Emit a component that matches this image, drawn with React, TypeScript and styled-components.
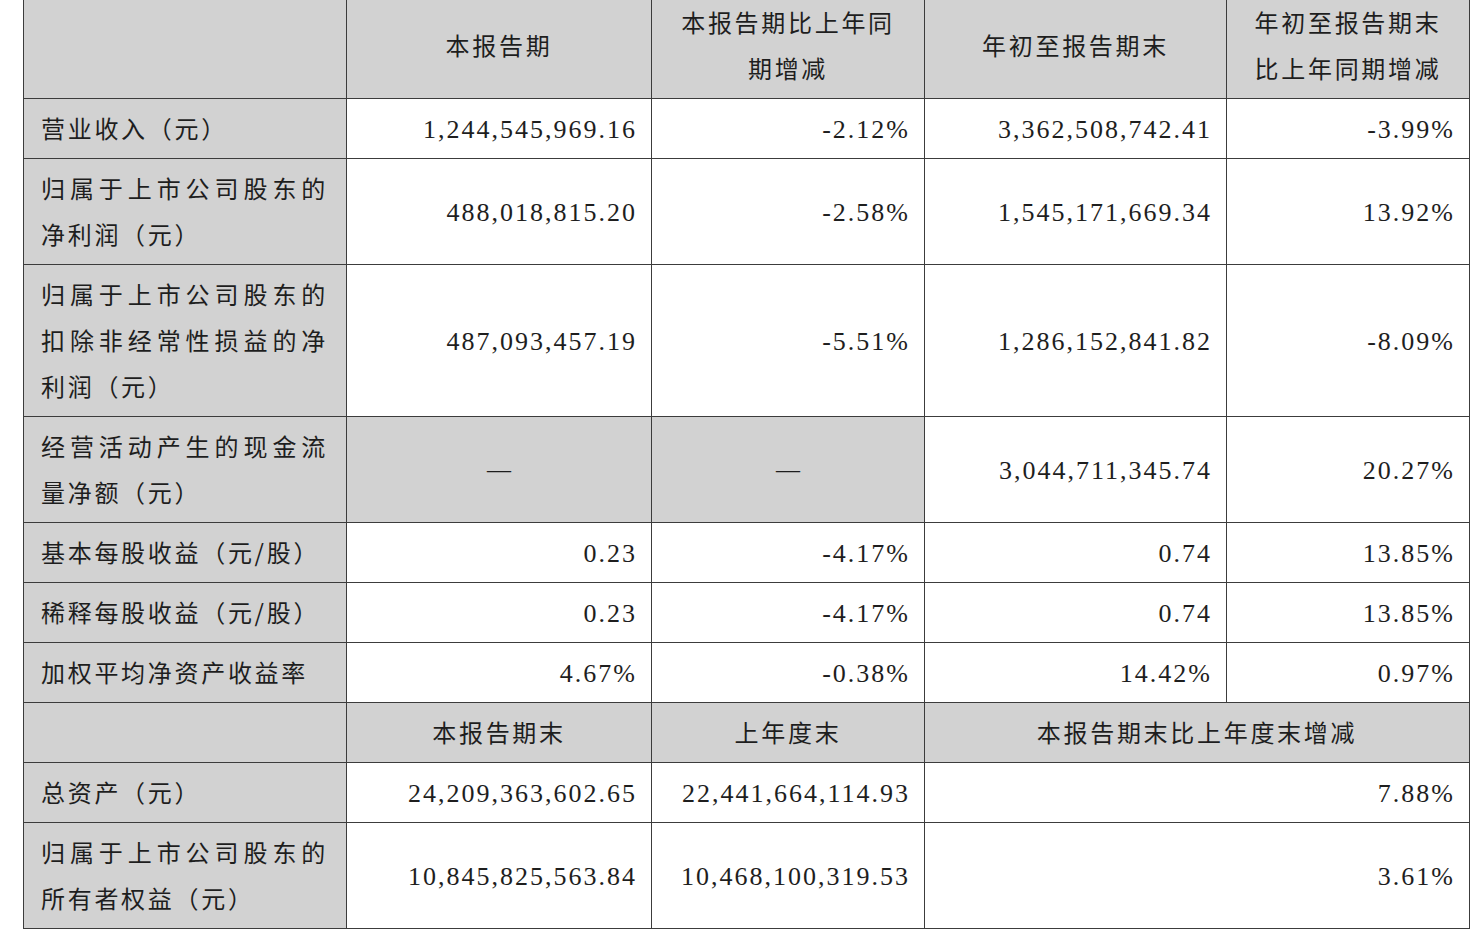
import React from "react";
import styled, { createGlobalStyle } from "styled-components";

const Global = createGlobalStyle`
  html, body {
    margin: 0;
    padding: 0;
    background: #ffffff;
    overflow: hidden;
  }
`;

const Page = styled.div`
  width: 1479px;
  height: 937px;
  padding-left: 23px;
  box-sizing: border-box;
  overflow: hidden;
`;

const Table = styled.table`
  margin-top: -8px;
  width: 1446px;
  border-collapse: collapse;
  table-layout: fixed;
  color: #1e1e1e;
  font-family: "Noto Sans CJK SC", "Noto Sans", sans-serif;
  font-size: 24px;
  line-height: 46px;
  letter-spacing: 2.7px;
`;

const Cell = styled.td`
  border: 1px solid #3c3c3c;
  padding: 6px 16px 7px;
  vertical-align: middle;
  background: #ffffff;
`;

const HeadCell = styled(Cell)`
  text-align: center;
  background: #d2d2d2;
`;

const LabelCell = styled(Cell)`
  background: #d2d2d2;
  text-align: justify;
  text-justify: inter-character;
  padding: 6px 18px 7px 17px;
`;

const NumCell = styled(Cell)`
  text-align: right;
  font-family: "Liberation Serif", "Times New Roman", serif;
  font-size: 26px;
  letter-spacing: 2px;
  padding: 8px 14px 5px 16px;
  white-space: nowrap;
`;

const DashCell = styled(Cell)`
  text-align: center;
  background: #d2d2d2;
  font-family: "Liberation Serif", "Times New Roman", serif;
  letter-spacing: 0;
`;

type Row = {
  label: string;
  values: (string | null)[];
};

const topRows: Row[] = [
  { label: "营业收入（元）", values: ["1,244,545,969.16", "-2.12%", "3,362,508,742.41", "-3.99%"] },
  { label: "归属于上市公司股东的净利润（元）", values: ["488,018,815.20", "-2.58%", "1,545,171,669.34", "13.92%"] },
  {
    label: "归属于上市公司股东的扣除非经常性损益的净利润（元）",
    values: ["487,093,457.19", "-5.51%", "1,286,152,841.82", "-8.09%"],
  },
  { label: "经营活动产生的现金流量净额（元）", values: [null, null, "3,044,711,345.74", "20.27%"] },
  { label: "基本每股收益（元/股）", values: ["0.23", "-4.17%", "0.74", "13.85%"] },
  { label: "稀释每股收益（元/股）", values: ["0.23", "-4.17%", "0.74", "13.85%"] },
  { label: "加权平均净资产收益率", values: ["4.67%", "-0.38%", "14.42%", "0.97%"] },
];

const bottomRows: Row[] = [
  { label: "总资产（元）", values: ["24,209,363,602.65", "22,441,664,114.93", "7.88%"] },
  { label: "归属于上市公司股东的所有者权益（元）", values: ["10,845,825,563.84", "10,468,100,319.53", "3.61%"] },
];

export default function App() {
  return (
    <Page>
      <Global />
      <Table>
        <colgroup>
          <col style={{ width: 323 }} />
          <col style={{ width: 305 }} />
          <col style={{ width: 273 }} />
          <col style={{ width: 302 }} />
          <col style={{ width: 243 }} />
        </colgroup>
        <tbody>
          <tr>
            <HeadCell>
              <br />
              <br />
            </HeadCell>
            <HeadCell>本报告期</HeadCell>
            <HeadCell>
              本报告期比上年同
              <br />
              期增减
            </HeadCell>
            <HeadCell>年初至报告期末</HeadCell>
            <HeadCell>
              年初至报告期末
              <br />
              比上年同期增减
            </HeadCell>
          </tr>
          {topRows.map((r) => (
            <tr key={r.label}>
              <LabelCell>{r.label}</LabelCell>
              {r.values.map((v, i) =>
                v === null ? <DashCell key={i}>—</DashCell> : <NumCell key={i}>{v}</NumCell>
              )}
            </tr>
          ))}
          <tr>
            <HeadCell />
            <HeadCell>本报告期末</HeadCell>
            <HeadCell>上年度末</HeadCell>
            <HeadCell colSpan={2}>本报告期末比上年度末增减</HeadCell>
          </tr>
          {bottomRows.map((r) => (
            <tr key={r.label}>
              <LabelCell>{r.label}</LabelCell>
              <NumCell>{r.values[0]}</NumCell>
              <NumCell>{r.values[1]}</NumCell>
              <NumCell colSpan={2}>{r.values[2]}</NumCell>
            </tr>
          ))}
        </tbody>
      </Table>
    </Page>
  );
}
